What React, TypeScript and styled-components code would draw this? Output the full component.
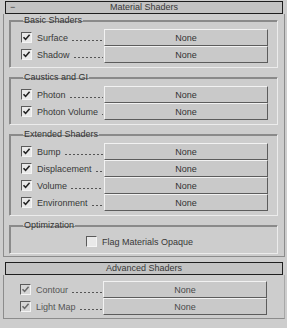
import styled, { createGlobalStyle } from 'styled-components';

interface ShaderSlot {
    label: string;
    checked: boolean;
}

interface ShaderGroup {
    title: string;
    slots: ShaderSlot[];
}

const groups: ShaderGroup[] = [
    {
        title: 'Basic Shaders',
        slots: [
            { label: 'Surface', checked: true },
            { label: 'Shadow', checked: true },
        ],
    },
    {
        title: 'Caustics and GI',
        slots: [
            { label: 'Photon', checked: true },
            { label: 'Photon Volume', checked: true },
        ],
    },
    {
        title: 'Extended Shaders',
        slots: [
            { label: 'Bump', checked: true },
            { label: 'Displacement', checked: true },
            { label: 'Volume', checked: true },
            { label: 'Environment', checked: true },
        ],
    },
];

const advanced: ShaderSlot[] = [
    { label: 'Contour', checked: true },
    { label: 'Light Map', checked: true },
];

const CheckBox = ({ checked, dim }: { checked: boolean; dim?: boolean }) => (
    <Box $dim={dim}>
        {checked && (
            <svg width="9" height="9" viewBox="0 0 9 9">
                <path d="M1.5 4.2 L3.6 6.4 L7.6 1.8" fill="none" stroke={dim ? '#6a6a6a' : '#222'} strokeWidth="1.6" />
            </svg>
        )}
    </Box>
);

const SlotRow = ({ slot, dim }: { slot: ShaderSlot; dim?: boolean }) => (
    <Row>
        <CheckBox checked={slot.checked} dim={dim} />
        <SlotLabel $dim={dim}>
            <SlotName>{slot.label}</SlotName>
            <Leader />
        </SlotLabel>
        <MapButton $dim={dim}>None</MapButton>
    </Row>
);

const App = () => {
    return (
        <>
            <GlobalStyle />
            <Page>
                <Rollout>
                    <TitleBar>
                        <Toggle>−</Toggle>
                        Material Shaders
                    </TitleBar>
                    <RolloutBody>
                        {groups.map((group) => (
                            <Group key={group.title}>
                                <Legend>{group.title}</Legend>
                                {group.slots.map((slot) => (
                                    <SlotRow key={slot.label} slot={slot} />
                                ))}
                            </Group>
                        ))}
                        <Group>
                            <Legend>Optimization</Legend>
                            <OptionRow>
                                <CheckBox checked={false} />
                                <OptionLabel>Flag Materials Opaque</OptionLabel>
                            </OptionRow>
                        </Group>
                    </RolloutBody>
                </Rollout>

                <Rollout>
                    <TitleBar>Advanced Shaders</TitleBar>
                    <AdvancedBody>
                        {advanced.map((slot) => (
                            <SlotRow key={slot.label} slot={slot} dim />
                        ))}
                    </AdvancedBody>
                </Rollout>
            </Page>
        </>
    );
};

const GlobalStyle = createGlobalStyle`
    html, body {
        margin: 0;
        padding: 0;
        background: #cdcdcd;
    }
`;

const Page = styled.div`
    width: 287px;
    height: 328px;
    padding-top: 1px;
    box-sizing: border-box;
    overflow: hidden;
    background: #cdcdcd;
    font-family: 'Liberation Sans', Arial, sans-serif;
    font-size: 9px;
    color: #383838;
    display: flex;
    flex-direction: column;
    gap: 5px;
`;

const Rollout = styled.section`
    display: flex;
    flex-direction: column;
`;

const TitleBar = styled.div`
    position: relative;
    height: 13px;
    margin: 0 4px 0 5px;
    border: 1px solid #1e1e1e;
    box-sizing: border-box;
    background: #c3c3c3;
    display: flex;
    align-items: center;
    justify-content: center;
    line-height: 11px;
`;

const Toggle = styled.span`
    position: absolute;
    left: 4px;
    top: 0;
`;

const RolloutBody = styled.div`
    margin: 0 2px 0 3px;
    padding: 1px 6px 2px 5px;
    border: 1px solid #8c8c8c;
    border-top: none;
    display: flex;
    flex-direction: column;
    gap: 4px;
`;

const AdvancedBody = styled.div`
    margin: 0 2px 0 3px;
    padding: 6px 17px 3px 16px;
    border: 1px solid #8c8c8c;
    border-top: none;
    border-right-color: #a8a8a8;
`;

const Group = styled.fieldset`
    margin: 0;
    padding: 3px 9px 4px 11px;
    border: 1px solid #8a8a8a;
    border-right-color: #ececec;
    border-bottom-color: #ececec;
    box-shadow: 1px 1px 0 #8a8a8a inset;
    min-width: 0;
`;

const Legend = styled.legend`
    padding: 0 1px;
    margin-left: 2px;
    line-height: 11px;
    color: #333;
`;

const Row = styled.div`
    height: 17px;
    display: flex;
    align-items: center;
`;

const Box = styled.span<{ $dim?: boolean }>`
    width: 11px;
    height: 11px;
    box-sizing: border-box;
    flex-shrink: 0;
    border: 1px solid;
    border-color: #5a5a5a #f4f4f4 #f4f4f4 #5a5a5a;
    background: ${({ $dim }) => ($dim ? '#d6d6d6' : '#e9e9e9')};
    display: flex;
    align-items: center;
    justify-content: center;
`;

const SlotLabel = styled.span<{ $dim?: boolean }>`
    width: 66px;
    margin-left: 5px;
    margin-right: 1px;
    display: flex;
    align-items: baseline;
    gap: 3px;
    color: ${({ $dim }) => ($dim ? '#555' : '#383838')};
`;

const SlotName = styled.span`
    white-space: nowrap;
`;

const Leader = styled.span`
    flex: 1;
    min-width: 0;
    height: 1px;
    background-image: radial-gradient(circle, #555 0.6px, transparent 0.8px);
    background-size: 4px 1px;
    background-repeat: repeat-x;
`;

const MapButton = styled.div<{ $dim?: boolean }>`
    flex: 1;
    height: 17px;
    box-sizing: border-box;
    border: 1px solid;
    border-color: #f2f2f2 #5c5c5c #5c5c5c #f2f2f2;
    background: #c9c9c9;
    display: flex;
    align-items: center;
    justify-content: center;
    color: ${({ $dim }) => ($dim ? '#4a4a4a' : '#333')};
`;

const OptionRow = styled.div`
    height: 15px;
    padding-left: 65px;
    display: flex;
    align-items: center;
    gap: 5px;
`;

const OptionLabel = styled.span`
    white-space: nowrap;
`;

export default App;
